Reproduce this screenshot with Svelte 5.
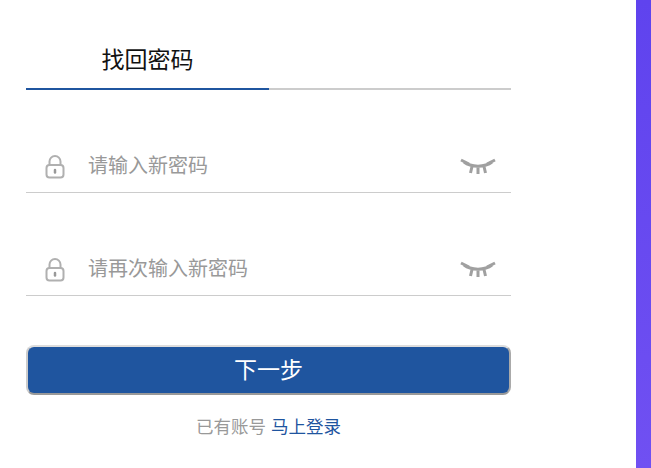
<script>
  const fields = ['请输入新密码', '请再次输入新密码']
</script>

{#snippet lockIcon()}
  <svg class="icon-lock" width="20" height="24" viewBox="0 0 20 24" fill="none" stroke="#b0b0b0" stroke-width="2">
    <path d="M4.500 10V6.500a5.500 5.500 0 0 1 11 0V10"></path>
    <rect x="1.500" y="10" width="17" height="12.500" rx="3"></rect>
    <path d="M10 15v2.500" stroke="#999" stroke-width="2.500" stroke-linecap="round"></path>
  </svg>
{/snippet}

{#snippet eyeIcon()}
  <svg width="36" height="18" viewBox="0 0 36 18" fill="none" stroke="#a0a0a0" stroke-width="3">
    <path d="M4 4 C11 9.500 25 9.500 32 4"></path>
    <path d="M1 2 9 6M35 2 27 6M12 8.500 10.500 15M24 8.500 25.500 15M18 9.500V16"></path>
  </svg>
{/snippet}

<div class="page">
  <main class="form">
    <div class="tabs">
      <div class="tab">找回密码</div>
    </div>

    {#each fields as placeholder}
      <label class="field">
        <span class="field__lock">{@render lockIcon()}</span>
        <input type="password" {placeholder} />
        <span class="field__eye">{@render eyeIcon()}</span>
      </label>
    {/each}

    <button class="submit" type="button">下一步</button>

    <p class="login">已有账号 <a href="#login">马上登录</a></p>
  </main>
  <aside class="side"></aside>
</div>

<style>
  :global(body) {
    margin: 0;
    background: #fff;
  }

  .page {
    display: flex;
    justify-content: space-between;
    height: 468px;
    overflow: hidden;
    font-family: "Liberation Sans", "Noto Sans CJK SC", sans-serif;
  }

  .form {
    width: 485px;
    margin-left: 26px;
  }

  .tabs {
    height: 90px;
    box-sizing: border-box;
    border-bottom: 2px solid #ccc;
    margin-bottom: 40px;
  }

  .tab {
    width: 243px;
    height: 90px;
    box-sizing: border-box;
    border-bottom: 2px solid #1f559f;
    padding-top: 44px;
    text-align: center;
    font-size: 23px;
    line-height: 32px;
    color: #111;
  }

  .field {
    display: flex;
    align-items: center;
    height: 63px;
    box-sizing: border-box;
    border-bottom: 1px solid #ccc;
    margin-bottom: 40px;
    padding-top: 11px;
  }

  .field__lock {
    display: flex;
    width: 62px;
    padding-left: 19px;
    box-sizing: border-box;
  }

  .field input {
    flex: 1;
    min-width: 0;
    border: none;
    outline: none;
    padding: 0;
    background: transparent;
    font: inherit;
    font-size: 20px;
  }

  .field input::placeholder {
    color: #999;
    opacity: 1;
  }

  .field__eye {
    display: flex;
    margin-right: 15px;
  }

  .submit {
    display: block;
    width: 485px;
    height: 50px;
    margin-top: 49px;
    padding: 0 0 5px;
    border: 2px solid;
    border-color: #ddd #aaa #999 #ccc;
    border-radius: 8px;
    background: #1f559f;
    color: #fff;
    font: inherit;
    font-size: 23px;
  }

  .login {
    margin: 17px 0 0;
    text-align: center;
    font-size: 17.500px;
    line-height: 30px;
    color: #999;
  }

  .login a {
    color: #1f559f;
    text-decoration: none;
  }

  .side {
    width: 15px;
    background: linear-gradient(180deg, #5f43ee, #7050f2);
  }
</style>
